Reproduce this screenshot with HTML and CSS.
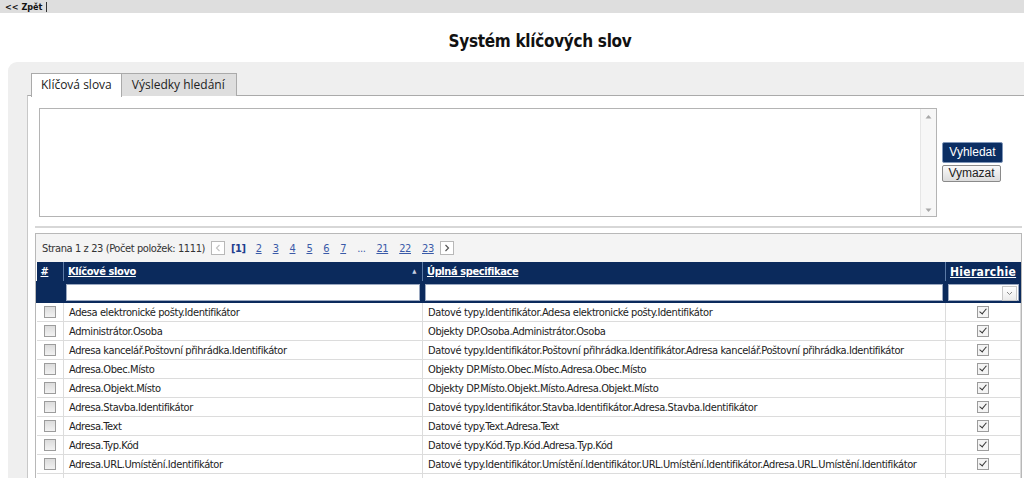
FILE: index.html
```html
<!DOCTYPE html>
<html lang="cs">
<head>
<meta charset="utf-8">
<title>Systém klíčových slov</title>
<link rel="stylesheet" href="styles.css">
</head>
<body>
<div class="topbar"><a class="back" href="#">&lt;&lt; Zpět</a><span class="sep"></span></div>
<h1 class="title">Systém klíčových slov</h1>
<div class="panel">
  <div class="tabs">
    <div class="tab active">Klíčová slova</div>
    <div class="tab">Výsledky hledání</div>
  </div>
  <div class="tabbody">
    <div class="search">
      <div class="textarea">
        <div class="scroll">
          <svg class="arr" width="7" height="5" viewBox="0 0 7 5"><path d="M0.5 4.5 L3.5 1 L6.5 4.5 Z" fill="#a8a8a8"/></svg>
          <svg class="arr" width="7" height="5" viewBox="0 0 7 5"><path d="M0.5 0.5 L3.5 4 L6.5 0.5 Z" fill="#a8a8a8"/></svg>
        </div>
      </div>
      <div class="buttons">
        <button class="btn primary">Vyhledat</button>
        <button class="btn">Vymazat</button>
      </div>
    </div>
    <div class="divider"></div>
    <div class="grid">
      <div class="pager">
        <span class="info">Strana 1 z 23 (Počet položek: 1111)</span>
        <span class="pbtn dis"><svg width="6" height="8" viewBox="0 0 6 8"><path d="M4.5 1 L1.5 4 L4.5 7" fill="none" stroke="#c4c4c4" stroke-width="1.2"/></svg></span>
        <b class="cur">[1]</b>
        <a href="#">2</a><a href="#">3</a><a href="#">4</a><a href="#">5</a><a href="#">6</a><a href="#">7</a>
        <span class="dots">...</span>
        <a href="#">21</a><a href="#">22</a><a href="#">23</a>
        <span class="pbtn"><svg width="6" height="8" viewBox="0 0 6 8"><path d="M1.5 1 L4.5 4 L1.5 7" fill="none" stroke="#555" stroke-width="1.2"/></svg></span>
      </div>
      <table class="tbl">
        <colgroup><col class="c1"><col class="c2"><col class="c3"><col class="c4"></colgroup>
        <thead>
          <tr class="hrow">
            <th><a href="#">#</a></th>
            <th><a href="#">Klíčové slovo</a><span class="sort">▲</span></th>
            <th><a href="#">Úplná specifikace</a></th>
            <th class="hc"><a href="#">Hierarchie</a></th>
          </tr>
          <tr class="frow">
            <th></th>
            <th><div class="inp"></div></th>
            <th><div class="inp"></div></th>
            <th><div class="inp sel"><span class="dd"><svg width="7" height="5" viewBox="0 0 7 5"><path d="M1 1 L3.5 3.5 L6 1" fill="none" stroke="#888" stroke-width="1"/></svg></span></div></th>
          </tr>
        </thead>
        <tbody>
          <tr><td class="cb"><span class="chk"></span></td><td>Adesa elektronické pošty.Identifikátor</td><td>Datové typy.Identifikátor.Adesa elektronické pošty.Identifikátor</td><td class="cb"><span class="chk on"></span></td></tr>
          <tr><td class="cb"><span class="chk"></span></td><td>Administrátor.Osoba</td><td>Objekty DP.Osoba.Administrátor.Osoba</td><td class="cb"><span class="chk on"></span></td></tr>
          <tr><td class="cb"><span class="chk"></span></td><td>Adresa kancelář.Poštovní přihrádka.Identifikátor</td><td>Datové typy.Identifikátor.Poštovní přihrádka.Identifikátor.Adresa kancelář.Poštovní přihrádka.Identifikátor</td><td class="cb"><span class="chk on"></span></td></tr>
          <tr><td class="cb"><span class="chk"></span></td><td>Adresa.Obec.Místo</td><td>Objekty DP.Místo.Obec.Místo.Adresa.Obec.Místo</td><td class="cb"><span class="chk on"></span></td></tr>
          <tr><td class="cb"><span class="chk"></span></td><td>Adresa.Objekt.Místo</td><td>Objekty DP.Místo.Objekt.Místo.Adresa.Objekt.Místo</td><td class="cb"><span class="chk on"></span></td></tr>
          <tr><td class="cb"><span class="chk"></span></td><td>Adresa.Stavba.Identifikátor</td><td>Datové typy.Identifikátor.Stavba.Identifikátor.Adresa.Stavba.Identifikátor</td><td class="cb"><span class="chk on"></span></td></tr>
          <tr><td class="cb"><span class="chk"></span></td><td>Adresa.Text</td><td>Datové typy.Text.Adresa.Text</td><td class="cb"><span class="chk on"></span></td></tr>
          <tr><td class="cb"><span class="chk"></span></td><td>Adresa.Typ.Kód</td><td>Datové typy.Kód.Typ.Kód.Adresa.Typ.Kód</td><td class="cb"><span class="chk on"></span></td></tr>
          <tr><td class="cb"><span class="chk"></span></td><td>Adresa.URL.Umístění.Identifikátor</td><td>Datové typy.Identifikátor.Umístění.Identifikátor.URL.Umístění.Identifikátor.Adresa.URL.Umístění.Identifikátor</td><td class="cb"><span class="chk on"></span></td></tr>
          <tr><td class="cb"></td><td></td><td></td><td class="cb"></td></tr>
        </tbody>
      </table>
    </div>
  </div>
</div>
</body>
</html>
```

FILE: styles.css
```css
html, body {
  margin: 0;
  padding: 0;
  background: #fff;
  overflow: hidden;
}
body {
  font-family: "DejaVu Sans Condensed", "DejaVu Sans", sans-serif;
  font-size: 11px;
  letter-spacing: -0.4px;
  color: #222;
}
.topbar {
  height: 13px;
  background: #dedede;
  display: flex;
  align-items: center;
  padding-left: 5px;
}
.back {
  font-weight: bold;
  font-size: 9px;
  letter-spacing: 0;
  color: #111;
  text-decoration: none;
}
.sep {
  width: 1px;
  height: 10px;
  background: #333;
  margin-left: 4px;
}
.title {
  margin: 0;
  height: 49px;
  line-height: 56px;
  text-align: center;
  font-size: 17px;
  letter-spacing: -0.3px;
  font-weight: bold;
  color: #111;
  padding-left: 56px;
}
.panel {
  margin-left: 8px;
  background: #efefef;
  border-top-left-radius: 9px;
  padding: 11px 0 0 19px;
}
.tabs {
  display: flex;
  padding-left: 4px;
  height: 22px;
  position: relative;
  z-index: 1;
}
.tab {
  font-family: "Open Sans", sans-serif;
  font-size: 12px;
  letter-spacing: 0;
  color: #222;
  border: 1px solid #aaa;
  border-bottom: none;
  background: #dedede;
  padding: 0 11px 0 10px;
  line-height: 22px;
  height: 22px;
}
.tab + .tab {
  border-left: none;
}
.tab.active {
  background: #fff;
  height: 23px;
  padding: 0 9px;
}
.tabbody {
  background: #fff;
  border-top: 1px solid #aaa;
  border-left: 1px solid #c8c8c8;
  padding: 12px 2px 0 7px;
  height: 400px;
}
.search {
  display: flex;
  align-items: flex-start;
}
.textarea {
  margin-left: 4px;
  width: 896px;
  height: 107px;
  border: 1px solid #b4b4b4;
  display: flex;
  justify-content: flex-end;
}
.scroll {
  width: 15px;
  background: #f7f7f7;
  border-left: 1px solid #e6e6e6;
  display: flex;
  flex-direction: column;
  justify-content: space-between;
  align-items: center;
  padding: 5px 0 3px;
}
.buttons {
  display: flex;
  flex-direction: column;
  align-items: flex-start;
  gap: 2px;
  padding-top: 34px;
  margin-left: 5px;
}
.btn {
  font-family: "Liberation Sans", Arial, sans-serif;
  font-size: 12px;
  letter-spacing: 0;
  border: 1px solid #8a8a8a;
  background: linear-gradient(#fafafa, #dcdcdc);
  color: #222;
  height: 17px;
  width: 59px;
  padding: 0;
  line-height: 15px;
  border-radius: 2px;
}
.btn.primary {
  background: #0b2e63;
  color: #fff;
  border: 1px solid #7f96b8;
  box-shadow: inset 0 0 0 1px #0b2e63;
  height: 21px;
  width: 61px;
  line-height: 19px;
}
.divider {
  margin-top: 9px;
  height: 2px;
  background: #d7d7d7;
}
.grid {
  margin-top: 5px;
  border: 1px solid #b8b8b8;
  border-bottom: none;
  background: #f4f4f4;
}
.pager {
  height: 28px;
  display: flex;
  align-items: center;
  padding-left: 6px;
  color: #333;
}
.pager .info {
  margin-right: 6px;
}
.pbtn {
  width: 12px;
  height: 12px;
  border: 1px solid #b8b8b8;
  background: #fff;
  display: inline-flex;
  align-items: center;
  justify-content: center;
}
.pager .cur {
  color: #1f3f8f;
  margin: 0 10px 0 6px;
}
.pager a {
  color: #3a5aa8;
  margin-right: 11px;
}
.pager .dots {
  color: #3a5aa8;
  margin-right: 11px;
}
.pager a:last-of-type {
  margin-right: 6px;
}
.tbl {
  width: 100%;
  border-collapse: collapse;
  table-layout: fixed;
  background: #fff;
}
.c1 { width: 27px; }
.c2 { width: 359px; }
.c4 { width: 75px; }
.hrow th {
  background: #0b2a5c;
  height: 19px;
  padding: 0 4px;
  text-align: left;
  border-left: 1px solid #5b7aa6;
  position: relative;
  white-space: nowrap;
}
.hrow th:first-child { border-left: none; }
.hrow th a {
  color: #fff;
  font-weight: bold;
  text-decoration: underline;
}
.hrow th.hc a {
  font-size: 12px;
  letter-spacing: 0.3px;
}
.sort {
  position: absolute;
  right: 6px;
  top: 5px;
  font-size: 6px;
  color: #c8d0e0;
}
.frow th {
  background: #0b2a5c;
  height: 22px;
  padding: 0 2px;
  border-left: 1px solid #0b2a5c;
}
.inp {
  height: 15px;
  background: #fff;
  border: 1px solid #9aa8c0;
}
.inp.sel {
  display: flex;
  justify-content: flex-end;
}
.dd {
  width: 13px;
  height: 13px;
  margin: 1px;
  border: 1px solid #c8c8c8;
  background: linear-gradient(#fff, #ececec);
  display: flex;
  align-items: center;
  justify-content: center;
}
.tbl td {
  height: 18px;
  padding: 0 5px;
  border: 1px solid #dcdcdc;
  border-top: none;
  white-space: nowrap;
  overflow: hidden;
  color: #222;
}
.tbl td:first-child { border-left: none; }
.tbl td.cb {
  text-align: center;
  padding: 0;
}
.chk {
  display: inline-block;
  width: 10px;
  height: 10px;
  border: 1px solid #9c9c9c;
  background: linear-gradient(#dcdcdc, #f2f2f2);
  vertical-align: middle;
  position: relative;
  top: -1px;
}
.chk.on {
  background: #f4f4f4;
}
.chk.on::after {
  content: "";
  position: absolute;
  left: 3px;
  top: 0px;
  width: 3px;
  height: 6px;
  border: solid #333;
  border-width: 0 1.5px 1.5px 0;
  transform: rotate(40deg);
}
```
